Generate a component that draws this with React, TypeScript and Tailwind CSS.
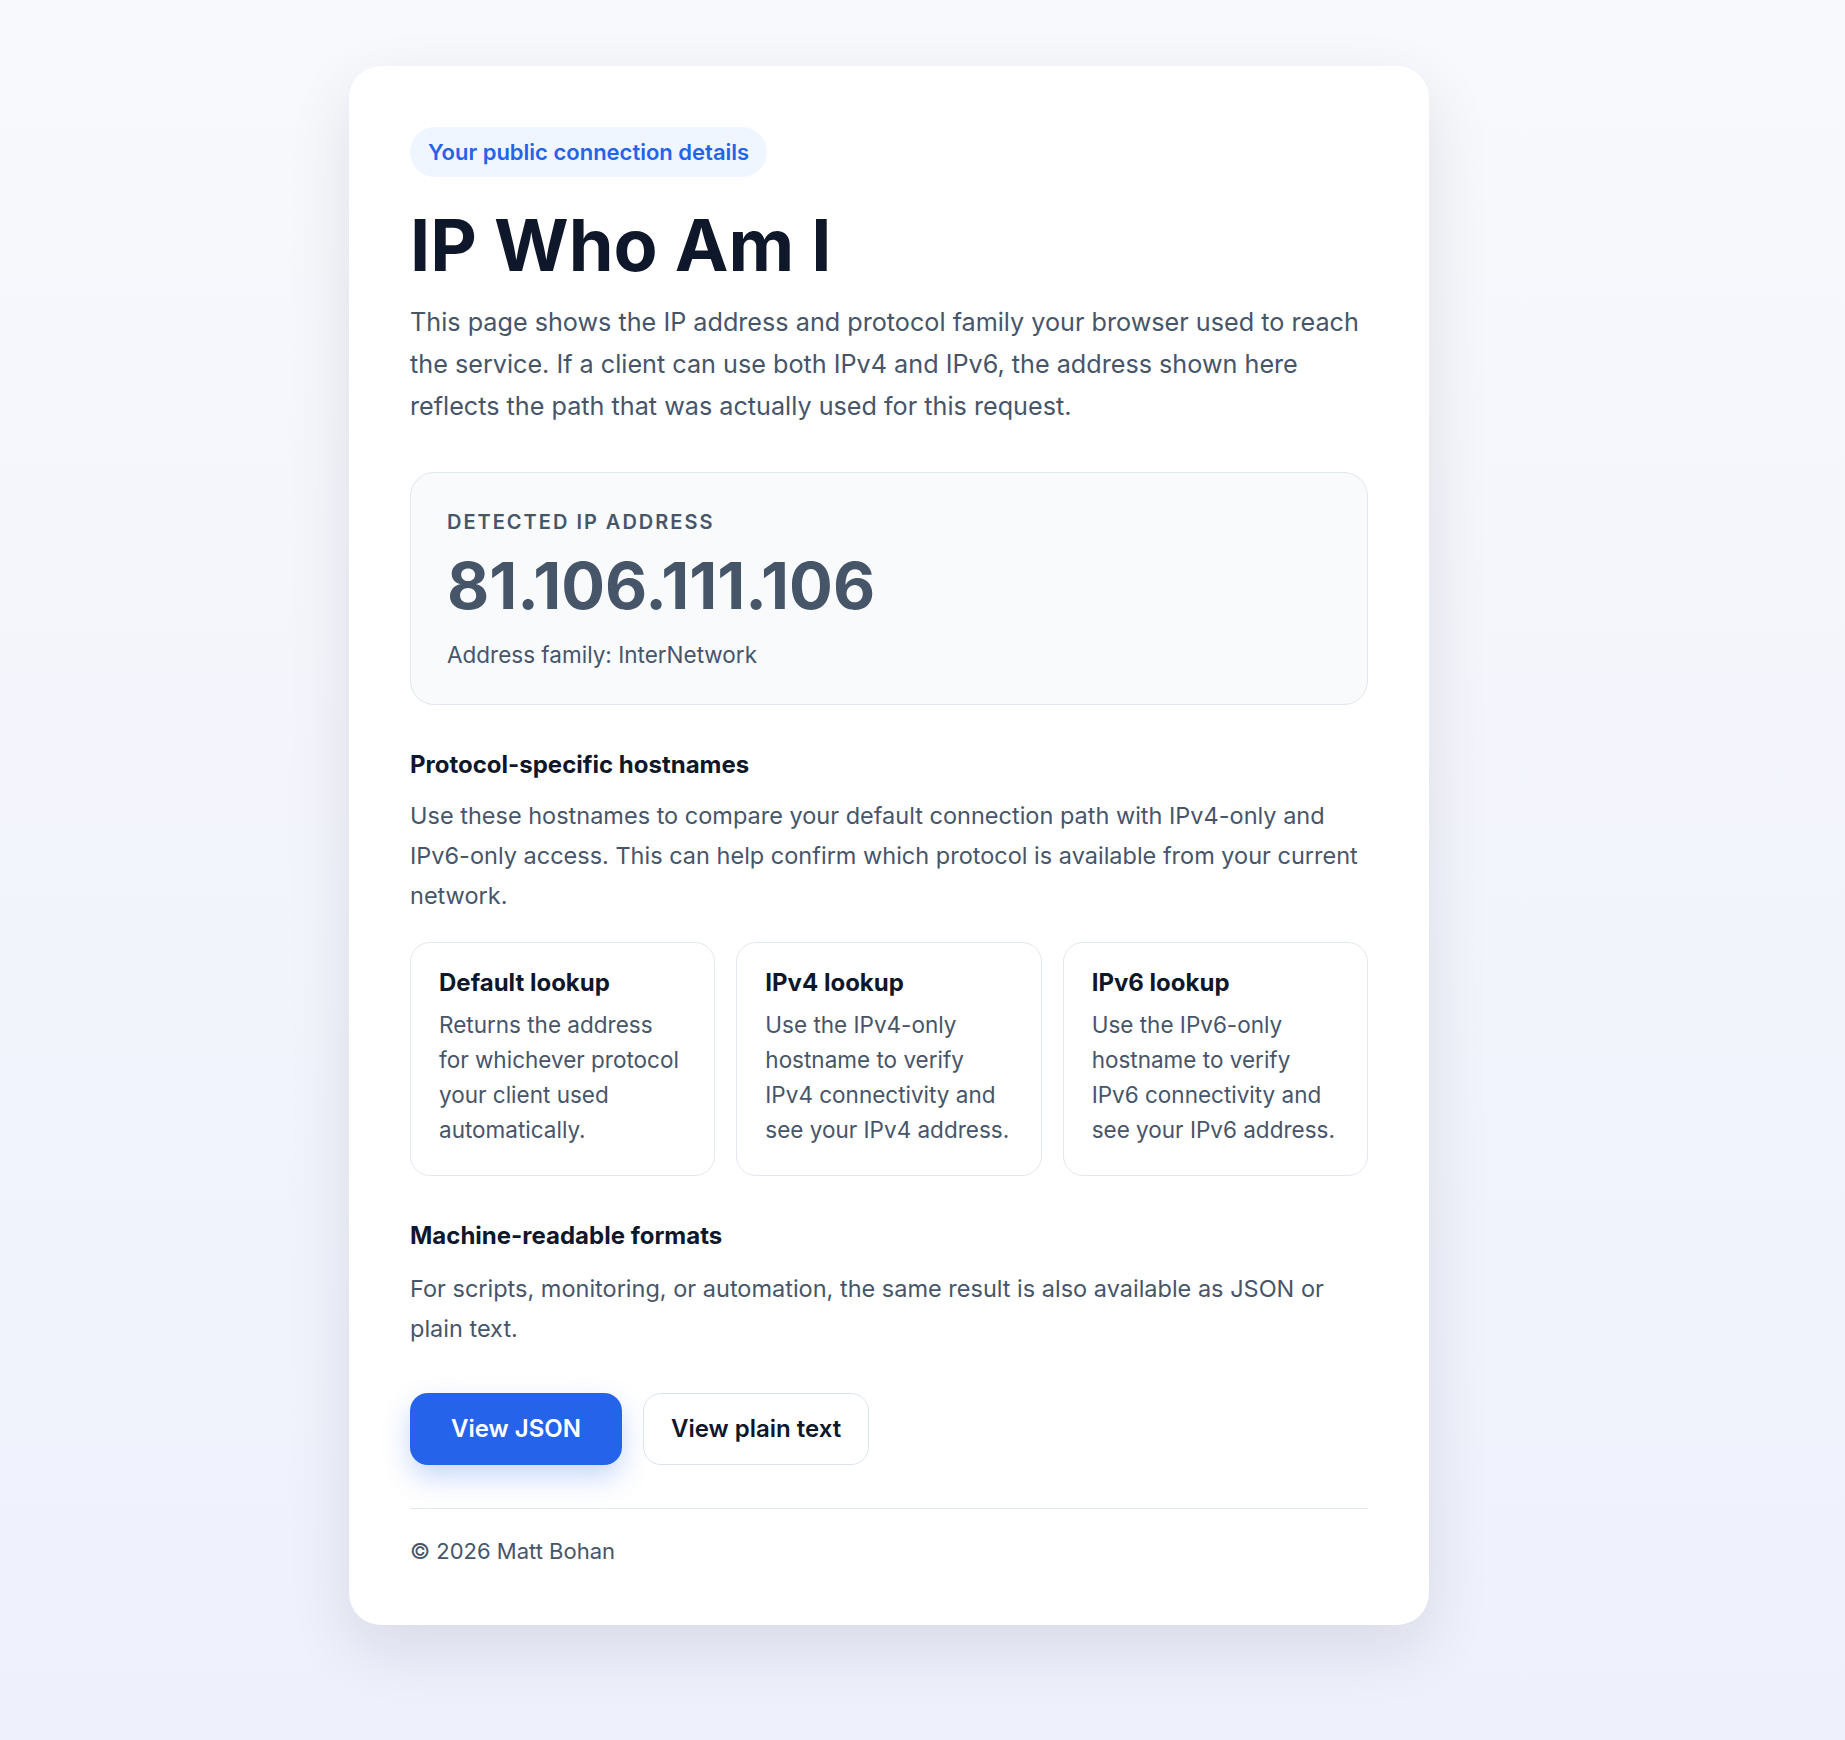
const lookups = [
  {
    title: "Default lookup",
    text: "Returns the address for whichever protocol your client used automatically.",
  },
  {
    title: "IPv4 lookup",
    text: "Use the IPv4-only hostname to verify IPv4 connectivity and see your IPv4 address.",
  },
  {
    title: "IPv6 lookup",
    text: "Use the IPv6-only hostname to verify IPv6 connectivity and see your IPv6 address.",
  },
]

function LookupCard({ title, text }: { title: string; text: string }) {
  return (
    <div className="rounded-[20px] border border-[#e2e8f0] bg-white px-7 pt-[27px] pb-7">
      <h3 className="text-[24px] leading-[1.1] font-bold text-[#0f172a]">{title}</h3>
      <p className="mt-[10px] text-[22.5px] leading-[35px] text-[#475569]">{text}</p>
    </div>
  )
}

export default function App() {
  return (
    <div className="min-h-screen bg-linear-to-b from-[#f8f9fc] to-[#eef0fc] pt-[66px] pb-[114px] pl-[349px] font-[Inter,sans-serif] antialiased">
      <main className="w-[1080px] rounded-[32px] bg-white px-[61px] pt-[61px] pb-[56px] shadow-[0_24px_64px_rgba(15,23,42,0.10)]">
        {/* Badge */}
        <div className="flex">
          <span className="rounded-full bg-[#eff6ff] px-[18px] py-[10px] text-[22px] leading-[30px] font-semibold text-[#2563eb]">
            Your public connection details
          </span>
        </div>

        <h1 className="mt-[28px] text-[72px] leading-[1.1] font-bold text-[#0f172a]">IP Who Am I</h1>
        <p className="mt-[17px] text-[25.2px] leading-[42px] text-[#475569]">
          This page shows the IP address and protocol family your browser used to reach the service. If a client can use
          both IPv4 and IPv6, the address shown here reflects the path that was actually used for this request.
        </p>

        {/* Detected address */}
        <section className="mt-[45px] rounded-3xl border border-[#e2e8f0] bg-[#f8fafc] px-9 pt-9 pb-[34px]">
          <div className="text-[20px] leading-[26px] font-semibold tracking-[0.1em] text-[#475569] uppercase">
            Detected IP address
          </div>
          <div className="mt-[18px] text-[65px] leading-none font-bold text-[#475569]">81.106.111.106</div>
          <div className="mt-[22px] text-[22.5px] leading-[30px] text-[#475569]">Address family: InterNetwork</div>
        </section>

        {/* Hostnames */}
        <h2 className="mt-[44px] text-[24px] leading-[31px] font-bold text-[#0f172a]">Protocol-specific hostnames</h2>
        <p className="mt-4 text-[23.5px] leading-[40px] text-[#475569]">
          Use these hostnames to compare your default connection path with IPv4-only and IPv6-only access. This can help
          confirm which protocol is available from your current network.
        </p>
        <div className="mt-[26px] grid grid-cols-3 gap-[21px]">
          {lookups.map((l) => (
            <LookupCard key={l.title} title={l.title} text={l.text} />
          ))}
        </div>

        {/* Formats */}
        <h2 className="mt-[44px] text-[24px] leading-[31px] font-bold text-[#0f172a]">Machine-readable formats</h2>
        <p className="mt-[18px] text-[23.5px] leading-[40px] text-[#475569]">
          For scripts, monitoring, or automation, the same result is also available as JSON or plain text.
        </p>
        <div className="mt-[44px] flex gap-[21px]">
          <a className="flex h-[72px] items-center rounded-[18px] bg-[#2563eb] px-[41px] text-[24px] font-semibold text-white shadow-[0_12px_28px_rgba(37,99,235,0.25)]">
            View JSON
          </a>
          <a className="flex h-[72px] items-center rounded-[18px] border border-[#dbe3ef] bg-white px-[27px] text-[24px] font-semibold text-[#0f172a]">
            View plain text
          </a>
        </div>

        <footer className="mt-[43px] border-t border-[#e2e8f0] pt-[25px] text-[22px] leading-[35px] text-[#475569]">
          © 2026 Matt Bohan
        </footer>
      </main>
    </div>
  )
}
